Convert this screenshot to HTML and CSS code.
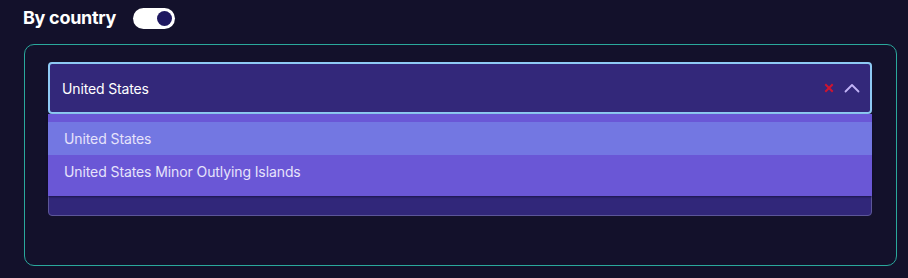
FILE: index.html
```html
<!DOCTYPE html>
<html>
<head>
<meta charset="utf-8">
<link rel="stylesheet" href="styles.css">
</head>
<body>
<div class="header">
  <span class="title">By country</span>
  <span class="toggle"><span class="knob"></span></span>
</div>
<div class="panel">
  <div class="select-wrap">
    <div class="select">
      <span class="value">United States</span>
      <span class="icons">
        <svg class="clear" width="10" height="10" viewBox="0 0 10 10"><path d="M2 2 L8 8 M8 2 L2 8" stroke="#d0142f" stroke-width="2" stroke-linecap="square"/></svg>
        <svg class="chev" width="16" height="10" viewBox="0 0 16 10"><path d="M1.5 8.5 L8 2 L14.5 8.5" fill="none" stroke="#c2b4f7" stroke-width="1.8" stroke-linecap="round" stroke-linejoin="round"/></svg>
      </span>
    </div>
    <div class="menu">
      <div class="option active">United States</div>
      <div class="option">United States Minor Outlying Islands</div>
    </div>
  </div>
  <div class="field2"></div>
</div>
</body>
</html>
```
FILE: styles.css
```css
* { box-sizing: border-box; }
html, body { margin: 0; padding: 0; }
body {
  background: #13112b;
  font-family: Inter, "Noto Sans", sans-serif;
  width: 908px;
  height: 278px;
  overflow: hidden;
}
.header {
  display: flex;
  align-items: center;
  gap: 17px;
  padding: 3px 0 0 23px;
  height: 33px;
}
.title {
  color: #ffffff;
  font-weight: 700;
  font-size: 18px;
  letter-spacing: -0.3px;
  line-height: 22px;
}
.toggle {
  width: 42px;
  height: 21px;
  border-radius: 11px;
  background: #ffffff;
  display: flex;
  align-items: center;
  justify-content: flex-end;
  padding-right: 3px;
}
.knob {
  width: 15px;
  height: 15px;
  border-radius: 50%;
  background: #1e1860;
}
.panel {
  margin: 11px 11px 0 24px;
  height: 222px;
  border: 1px solid #2aa89c;
  border-radius: 10px;
  padding: 17px 24px 0 23px;
}
.select-wrap { position: relative; }
.select {
  height: 52px;
  border: 2px solid #8ecaf4;
  border-radius: 4px;
  background: #33287a;
  display: flex;
  align-items: center;
  justify-content: space-between;
  padding: 0 10px 0 12px;
}
.value {
  color: #ffffff;
  font-size: 14px;
  letter-spacing: -0.15px;
}
.icons {
  display: flex;
  align-items: center;
  gap: 10px;
}
.menu {
  position: absolute;
  left: 0;
  right: 0;
  top: 52px;
  background: #6a57d6;
  padding: 8px 0;
  z-index: 2;
  box-shadow: 0 1px 2px rgba(10, 8, 40, 0.6);
}
.option {
  height: 33px;
  display: flex;
  align-items: center;
  padding-left: 16px;
  color: #e6e3fb;
  font-size: 14px;
  letter-spacing: -0.1px;
}
.option.active { background: #7377e2; }
.field2 {
  margin-top: 50px;
  height: 52px;
  background: #31277a;
  border: 1px solid #5c5699;
  border-radius: 4px;
}
```
